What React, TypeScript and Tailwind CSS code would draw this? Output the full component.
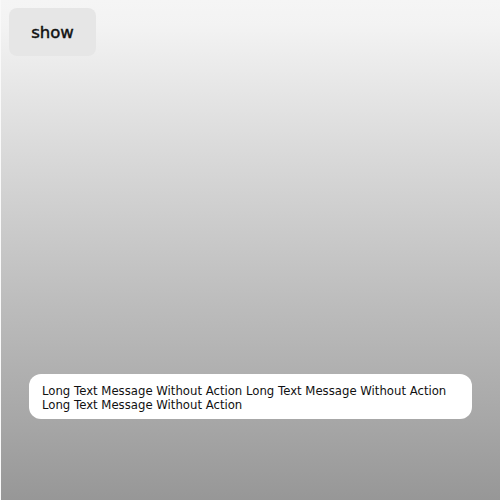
export default function App() {
  return (
    <div className="relative h-[500px] w-[500px] overflow-hidden bg-[#f9f9f9]" style={{ fontFamily: '"DejaVu Sans", sans-serif' }}>
      <div className="absolute inset-y-0 left-px right-0 bg-[linear-gradient(to_bottom,#f5f5f5_0%,#f3f3f3_5%,#dadada_30%,#bdbdbd_60%,#a6a6a6_85%,#979797_100%)]" />
      <div className="relative p-[9px] pt-[8px]">
        <button className="flex h-[48px] w-[87px] items-center justify-center rounded-[8px] bg-[#e6e6e6] pt-[2px] text-[16.5px] font-medium text-[#111] [-webkit-text-stroke:0.45px_#111]">
          show
        </button>
      </div>
      <div className="absolute bottom-[81px] left-[29px] right-[28px] h-[45px] rounded-[12px] bg-white px-[13px] pt-[10px] text-[11.7px] leading-[14px] text-[#111]">
        Long Text Message Without Action Long Text Message Without Action Long Text Message Without Action
      </div>
    </div>
  );
}
